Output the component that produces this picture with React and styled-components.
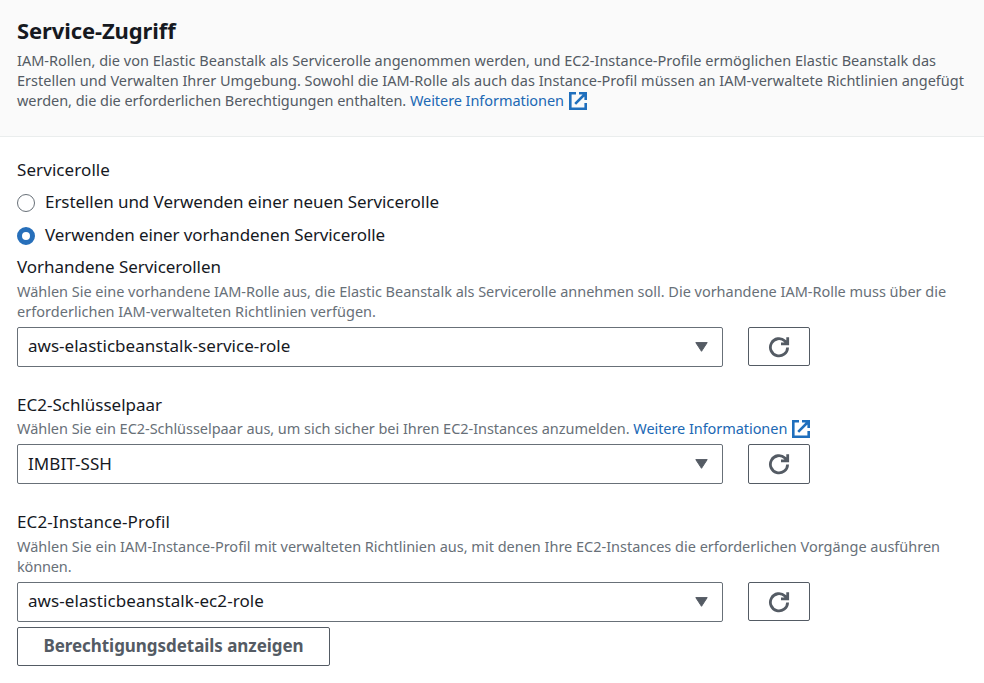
import React, { useState } from 'react';
import styled, { createGlobalStyle } from 'styled-components';

const GlobalStyle = createGlobalStyle`
  * { box-sizing: border-box; }
  body {
    margin: 0;
    background: #ffffff;
    color: #16191f;
    font-family: "Noto Sans", "Open Sans", sans-serif;
    font-size: 17px;
    line-height: 20px;
  }
`;

const Panel = styled.main`
  width: 984px;
  min-height: 683px;
  display: flex;
  flex-direction: column;
  overflow: hidden;
`;

const Header = styled.header`
  height: 137px;
  padding: 16px 17px 0;
  background: #fafafa;
  border-bottom: 1px solid #eaeded;
`;

const Title = styled.h2`
  margin: 0 0 6px;
  font-size: 22px;
  font-weight: 700;
  line-height: 28px;
  letter-spacing: -0.1px;
`;

const Copy = styled.p`
  margin: 0;
  font-size: 14.5px;
  line-height: 20px;
  color: ${(p) => (p.$hint ? '#687078' : '#545b64')};
`;

const Line = styled.span`
  display: flex;
  height: 20px;
  white-space: pre;
  letter-spacing: ${(p) => p.$track || 0}px;
`;

const Link = styled.a`
  display: inline-flex;
  color: #2068b4;
  text-decoration: none;
  letter-spacing: -0.064px;
`;

const ExternalSvg = styled.svg`
  width: 18px;
  height: 18px;
  margin: 2px 0 0 5px;
  fill: none;
  stroke: #1f6fbd;
  stroke-width: 2.6;
`;

const Body = styled.section`
  display: flex;
  flex-direction: column;
  padding: 23px 17px 0;
`;

const Group = styled.div`
  display: flex;
  flex-direction: column;
  margin-bottom: ${(p) => p.$gap}px;
`;

const Label = styled.div`
  height: 20px;
  margin-bottom: ${(p) => p.$gap ?? 4}px;
  white-space: nowrap;
  letter-spacing: ${(p) => p.$track || 0}px;
`;

const Options = styled.div`
  display: flex;
  flex-direction: column;
  gap: 13px;
`;

const Option = styled.label`
  display: flex;
  height: 20px;
  gap: 10px;
  white-space: nowrap;
  letter-spacing: ${(p) => p.$track}px;
  cursor: pointer;
`;

const Radio = styled.input.attrs({ type: 'radio' })`
  appearance: none;
  flex: none;
  width: 18px;
  height: 18px;
  margin: 2px 0 0;
  border: 1.5px solid #687078;
  border-radius: 50%;
  background: #ffffff;
  &:checked {
    border: 5.5px solid #276fba;
  }
`;

const Controls = styled.div`
  display: flex;
  gap: 25px;
  margin-top: 6px;
`;

const SelectBox = styled.button`
  display: flex;
  align-items: center;
  justify-content: space-between;
  width: 706px;
  height: 40px;
  padding: 0 14px ${(p) => (p.$low ? 0 : 2)}px 10px;
  border: 1px solid #687078;
  border-radius: 2px;
  background: #ffffff;
  color: #16191f;
  font: inherit;
  letter-spacing: ${(p) => p.$track || 0}px;
`;

const Caret = styled.svg`
  width: 13px;
  height: 10px;
  margin-top: ${(p) => (p.$low ? 0 : 2)}px;
  fill: #545b64;
  stroke: #545b64;
  stroke-linejoin: round;
`;

const Button = styled.button`
  display: flex;
  align-items: center;
  justify-content: center;
  width: ${(p) => p.$width}px;
  height: ${(p) => p.$height || 39}px;
  padding: 0 0 ${(p) => p.$lift || 0}px;
  border: 1px solid #545b64;
  border-radius: 2px;
  background: #ffffff;
  color: #545b64;
  font: inherit;
  font-weight: 700;
  letter-spacing: -0.05px;
`;

const RefreshSvg = styled.svg`
  width: 22px;
  height: 22px;
  fill: none;
  stroke: #545b64;
  stroke-width: 2.8;
`;

function InfoLink() {
  return (
    <Link href="#">
      Weitere Informationen
      <ExternalSvg viewBox="0 0 18 18" aria-hidden="true">
        <path d="M7 1.3H1.3v15.4h15.4V11M10 1.3h6.7V8M16.5 1.5 6.2 11.8" />
      </ExternalSvg>
    </Link>
  );
}

function SelectRow({ value, track, low }) {
  return (
    <Controls>
      <SelectBox $track={track} $low={low}>
        {value}
        <Caret viewBox="0 0 13 10" aria-hidden="true" $low={low}>
          <path d="M.8.6h11.4L6.5 9.3Z" />
        </Caret>
      </SelectBox>
      <Button $width={62} $height={low ? 40 : 39} $lift={low ? 1 : 0} aria-label="Aktualisieren">
        <RefreshSvg viewBox="0 0 22 22" aria-hidden="true">
          <path d="M19.6 11.4A8.6 8.6 0 1 1 16.9 5L19.2 7.3M19.7 1.2V7.8H13" />
        </RefreshSvg>
      </Button>
    </Controls>
  );
}

export default function App() {
  const [role, setRole] = useState('existing');
  return (
    <Panel>
      <GlobalStyle />
      <Header>
        <Title>Service-Zugriff</Title>
        <Copy>
          <Line $track={0.006}>IAM-Rollen, die von Elastic Beanstalk als Servicerolle angenommen werden, und EC2-Instance-Profile ermöglichen Elastic Beanstalk das</Line>
          <Line>Erstellen und Verwalten Ihrer Umgebung. Sowohl die IAM-Rolle als auch das Instance-Profil müssen an IAM-verwaltete Richtlinien angefügt</Line>
          <Line $track={-0.045}>{'werden, die die erforderlichen Berechtigungen enthalten. '}<InfoLink /></Line>
        </Copy>
      </Header>
      <Body>
        <Group $gap={12}>
          <Label $gap={12} $track={0.08}>Servicerolle</Label>
          <Options>
            <Option $track={-0.064}>
              <Radio name="role" checked={role === 'new'} onChange={() => setRole('new')} />
              Erstellen und Verwenden einer neuen Servicerolle
            </Option>
            <Option $track={-0.1}>
              <Radio name="role" checked={role === 'existing'} onChange={() => setRole('existing')} />
              Verwenden einer vorhandenen Servicerolle
            </Option>
          </Options>
        </Group>
        <Group $gap={28}>
          <Label $track={-0.034}>Vorhandene Servicerollen</Label>
          <Copy $hint>
            <Line $track={-0.021}>Wählen Sie eine vorhandene IAM-Rolle aus, die Elastic Beanstalk als Servicerolle annehmen soll. Die vorhandene IAM-Rolle muss über die</Line>
            <Line $track={0.023}>erforderlichen IAM-verwalteten Richtlinien verfügen.</Line>
          </Copy>
          <SelectRow value="aws-elasticbeanstalk-service-role" track={0.02} />
        </Group>
        <Group $gap={28}>
          <Label $gap={3}>EC2-Schlüsselpaar</Label>
          <Copy $hint>
            <Line $track={-0.042}>{'Wählen Sie ein EC2-Schlüsselpaar aus, um sich sicher bei Ihren EC2-Instances anzumelden. '}<InfoLink /></Line>
          </Copy>
          <SelectRow value="IMBIT-SSH" track={0.055} low />
        </Group>
        <Group $gap={5}>
          <Label $track={0.1}>EC2-Instance-Profil</Label>
          <Copy $hint>
            <Line $track={-0.01}>Wählen Sie ein IAM-Instance-Profil mit verwalteten Richtlinien aus, mit denen Ihre EC2-Instances die erforderlichen Vorgänge ausführen</Line>
            <Line $track={-0.15}>können.</Line>
          </Copy>
          <SelectRow value="aws-elasticbeanstalk-ec2-role" track={0.083} />
        </Group>
        <Button $width={313} $lift={1}>Berechtigungsdetails anzeigen</Button>
      </Body>
    </Panel>
  );
}
